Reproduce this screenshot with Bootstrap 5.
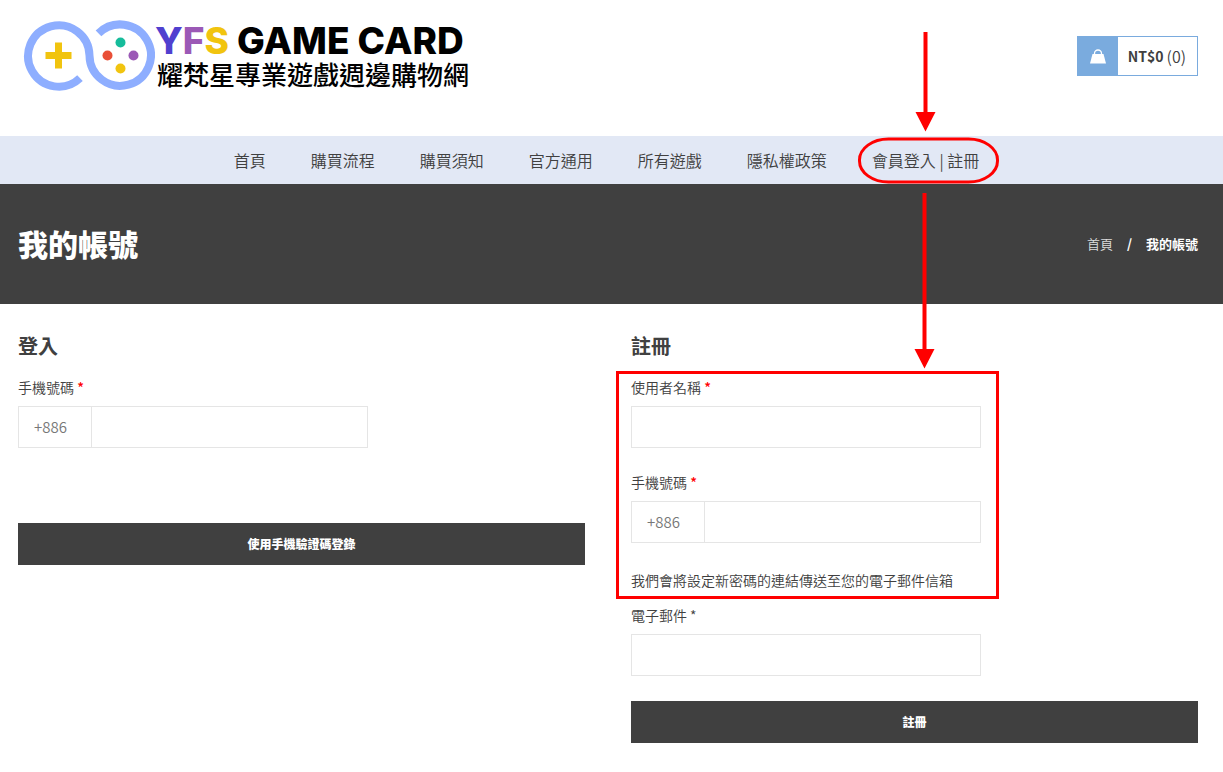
<!DOCTYPE html>
<html lang="zh-Hant">
<head>
<meta charset="utf-8">
<meta name="viewport" content="width=device-width, initial-scale=1">
<title>我的帳號 - YFS GAME CARD</title>
<link href="https://cdn.jsdelivr.net/npm/bootstrap@5.3.0/dist/css/bootstrap.min.css" rel="stylesheet">
<style>
  body { font-family: "Noto Sans CJK TC", sans-serif; font-size: 14px; font-weight: 350; line-height: 20px; color: #404040; background: #fff; }
  a { color: inherit; text-decoration: none; }
  .page-pad { padding-left: 18px; padding-right: 25px; }

  /* Header */
  .site-header { padding-top: 20px; padding-bottom: 45px; }
  .brand-link { color: #000; padding-left: 5px; }
  .brand-name { font-family: Inter, sans-serif; font-weight: 800; font-size: 37px; line-height: 42px; }
  .brand-sub { font-size: 26px; font-weight: 500; line-height: 24px; padding-left: 2px; }
  .c-y { color: #5040cf; } .c-f { color: #9b59b6; } .c-s { color: #f1c40f; }
  .cart-link { height: 40px; border: 1px solid #7aabde; margin-top: 16px; }
  .cart-icon { width: 40px; background: #7aabde; }
  .cart-text { font-size: 14px; padding: 0 11px 0 10px; gap: 3px; }

  /* Menu */
  .main-nav { background: #e2e8f5; }
  .main-nav ul { gap: 0 45px; padding: 0 25px 0 18px; }
  .main-nav a { font-size: 16px; line-height: 48px; display: block; height: 48px; }
  .main-nav li:last-child { margin-right: 3px; }
  .guide { position: absolute; left: -15px; top: -104px; z-index: 5; pointer-events: none; }

  /* Title band */
  .title-band { background: #404040; color: #fff; min-height: 120px; }
  .title-band h1 { font-size: 30px; line-height: 40px; font-weight: 900; padding-bottom: 2px; }
  .crumbs { font-size: 13px; --bs-breadcrumb-divider-color: #fff; --bs-breadcrumb-item-padding-x: 14px; --bs-breadcrumb-item-active-color: #fff; }
  .crumbs a { color: #ddd; }
  .crumbs .active, .crumbs .breadcrumb-item::before { font-weight: 700; }

  /* Forms */
  .account { padding-top: 28px; padding-bottom: 29px; }
  .account .row { --bs-gutter-x: 46px; }
  h2 { font-size: 20px; line-height: 28px; font-weight: 700; margin-bottom: 17px; }
  .field { max-width: 350px; margin-bottom: 24px; }
  .field label { display: block; margin-bottom: 9px; }
  .req { color: #f00; font-weight: 500; }
  .form-control, .input-group-text { height: 42px; border: 1px solid #e5e5e5; border-radius: 0; font-size: 14px; background: #fff; }
  .input-group-text { width: 74px; padding: 0 15px; color: #777; font-size: 15px; font-weight: 350; }
  .btn-dark-flat { width: 100%; height: 42px; border: 0; border-radius: 0; background: #404040; color: #fff; font-size: 12px; font-weight: 900; line-height: 20px; }
  .btn-dark-flat:hover { background: #2c2c2c; color: #fff; }
  .field-last { margin-bottom: 25px; }
  .login-gap { margin-bottom: 75px; }
  .marked { max-width: 350px; margin-bottom: 15px; }
  .marked::after { content: ""; position: absolute; inset: -6px -18px -9px -15px; border: 3px solid #f00; pointer-events: none; }
  .note { margin: 27px 0 0; }
</style>
</head>
<body>
<header class="site-header page-pad d-flex justify-content-between align-items-start">
  <a href="#" class="brand-link d-flex align-items-start">
    <svg width="132" height="71" viewBox="-0.500 0 132 71" aria-hidden="true">
      <path d="M56.500 58.200A30.700 30.700 0 1 1 66 35.500A30.700 30.700 0 1 0 75 13.400" fill="none" stroke="#8eaeff" stroke-width="8"/>
      <path d="M31.500 22.500h7v9.500h9.500v7h-9.500v9.500h-7v-9.500h-9.500v-7h9.500z" fill="#f1c40f"/>
      <circle cx="97" cy="22.500" r="5" fill="#16bc9b"/>
      <circle cx="84" cy="35.500" r="5" fill="#e94f37"/>
      <circle cx="110" cy="35.500" r="5" fill="#9b59b6"/>
      <circle cx="97" cy="48.500" r="5" fill="#f1c40f"/>
    </svg>
    <span class="d-flex flex-column">
      <span class="brand-name"><span class="c-y">Y</span><span class="c-f">F</span><span class="c-s">S</span> GAME CARD</span>
      <span class="brand-sub">耀梵星專業遊戲週邊購物網</span>
    </span>
  </a>
  <a href="#" class="cart-link d-flex align-items-stretch" aria-label="購物車">
    <span class="cart-icon d-flex align-items-center justify-content-center">
      <svg width="16" height="15" viewBox="0 0 16 15" aria-hidden="true"><path d="M2.500 5h11L16 14.500H0z" fill="#fff"/><path d="M4.500 6V4.500a3.500 3.500 0 0 1 7 0V6" fill="none" stroke="#fff" stroke-width="1.300"/></svg>
    </span>
    <span class="cart-text d-flex align-items-center"><b class="fw-semibold">NT$0</b><span class="fs-6">(0)</span></span>
  </a>
</header>

<nav class="main-nav">
  <ul class="list-unstyled d-flex flex-wrap justify-content-center mb-0">
    <li><a href="#">首頁</a></li>
    <li><a href="#">購買流程</a></li>
    <li><a href="#">購買須知</a></li>
    <li><a href="#">官方通用</a></li>
    <li><a href="#">所有遊戲</a></li>
    <li><a href="#">隱私權政策</a></li>
    <li class="position-relative"><a href="#">會員登入 | 註冊</a>
      <svg class="guide" width="144" height="338" viewBox="0 0 144 338" aria-hidden="true">
        <g fill="#f00">
          <path d="M66.500 0h4v80h8L68.500 99.500L58.500 80h8z"/>
          <path d="M65.500 161h4v156h8L67.500 336.500L57.500 317h8z"/>
        </g>
        <rect x="2.500" y="107" width="138" height="43" rx="29" ry="21" fill="none" stroke="#f00" stroke-width="3"/>
      </svg>
    </li>
  </ul>
</nav>

<div class="title-band page-pad d-flex justify-content-between align-items-center">
  <h1 class="mb-0">我的帳號</h1>
  <nav aria-label="breadcrumb">
    <ol class="breadcrumb crumbs mb-0">
      <li class="breadcrumb-item"><a href="#">首頁</a></li>
      <li class="breadcrumb-item active" aria-current="page">我的帳號</li>
    </ol>
  </nav>
</div>

<main class="account page-pad">
  <div class="row">
    <section class="col-md-6">
      <h2>登入</h2>
      <form>
        <div class="field login-gap">
          <label for="login-phone">手機號碼 <span class="req">*</span></label>
          <div class="input-group">
            <span class="input-group-text">+886</span>
            <input type="tel" class="form-control" id="login-phone">
          </div>
        </div>
        <button type="button" class="btn btn-dark-flat">使用手機驗證碼登錄</button>
      </form>
    </section>
    <section class="col-md-6">
      <h2>註冊</h2>
      <form>
        <div class="marked position-relative">
          <div class="field">
            <label for="reg-name">使用者名稱 <span class="req">*</span></label>
            <input type="text" class="form-control" id="reg-name">
          </div>
          <div class="field">
            <label for="reg-phone">手機號碼 <span class="req">*</span></label>
            <div class="input-group">
              <span class="input-group-text">+886</span>
              <input type="tel" class="form-control" id="reg-phone">
            </div>
          </div>
          <p class="note">我們會將設定新密碼的連結傳送至您的電子郵件信箱</p>
        </div>
        <div class="field field-last">
          <label for="reg-mail">電子郵件 *</label>
          <input type="email" class="form-control" id="reg-mail">
        </div>
        <button type="button" class="btn btn-dark-flat">註冊</button>
      </form>
    </section>
  </div>
</main>
<script src="https://cdn.jsdelivr.net/npm/bootstrap@5.3.0/dist/js/bootstrap.bundle.min.js"></script>
</body>
</html>
